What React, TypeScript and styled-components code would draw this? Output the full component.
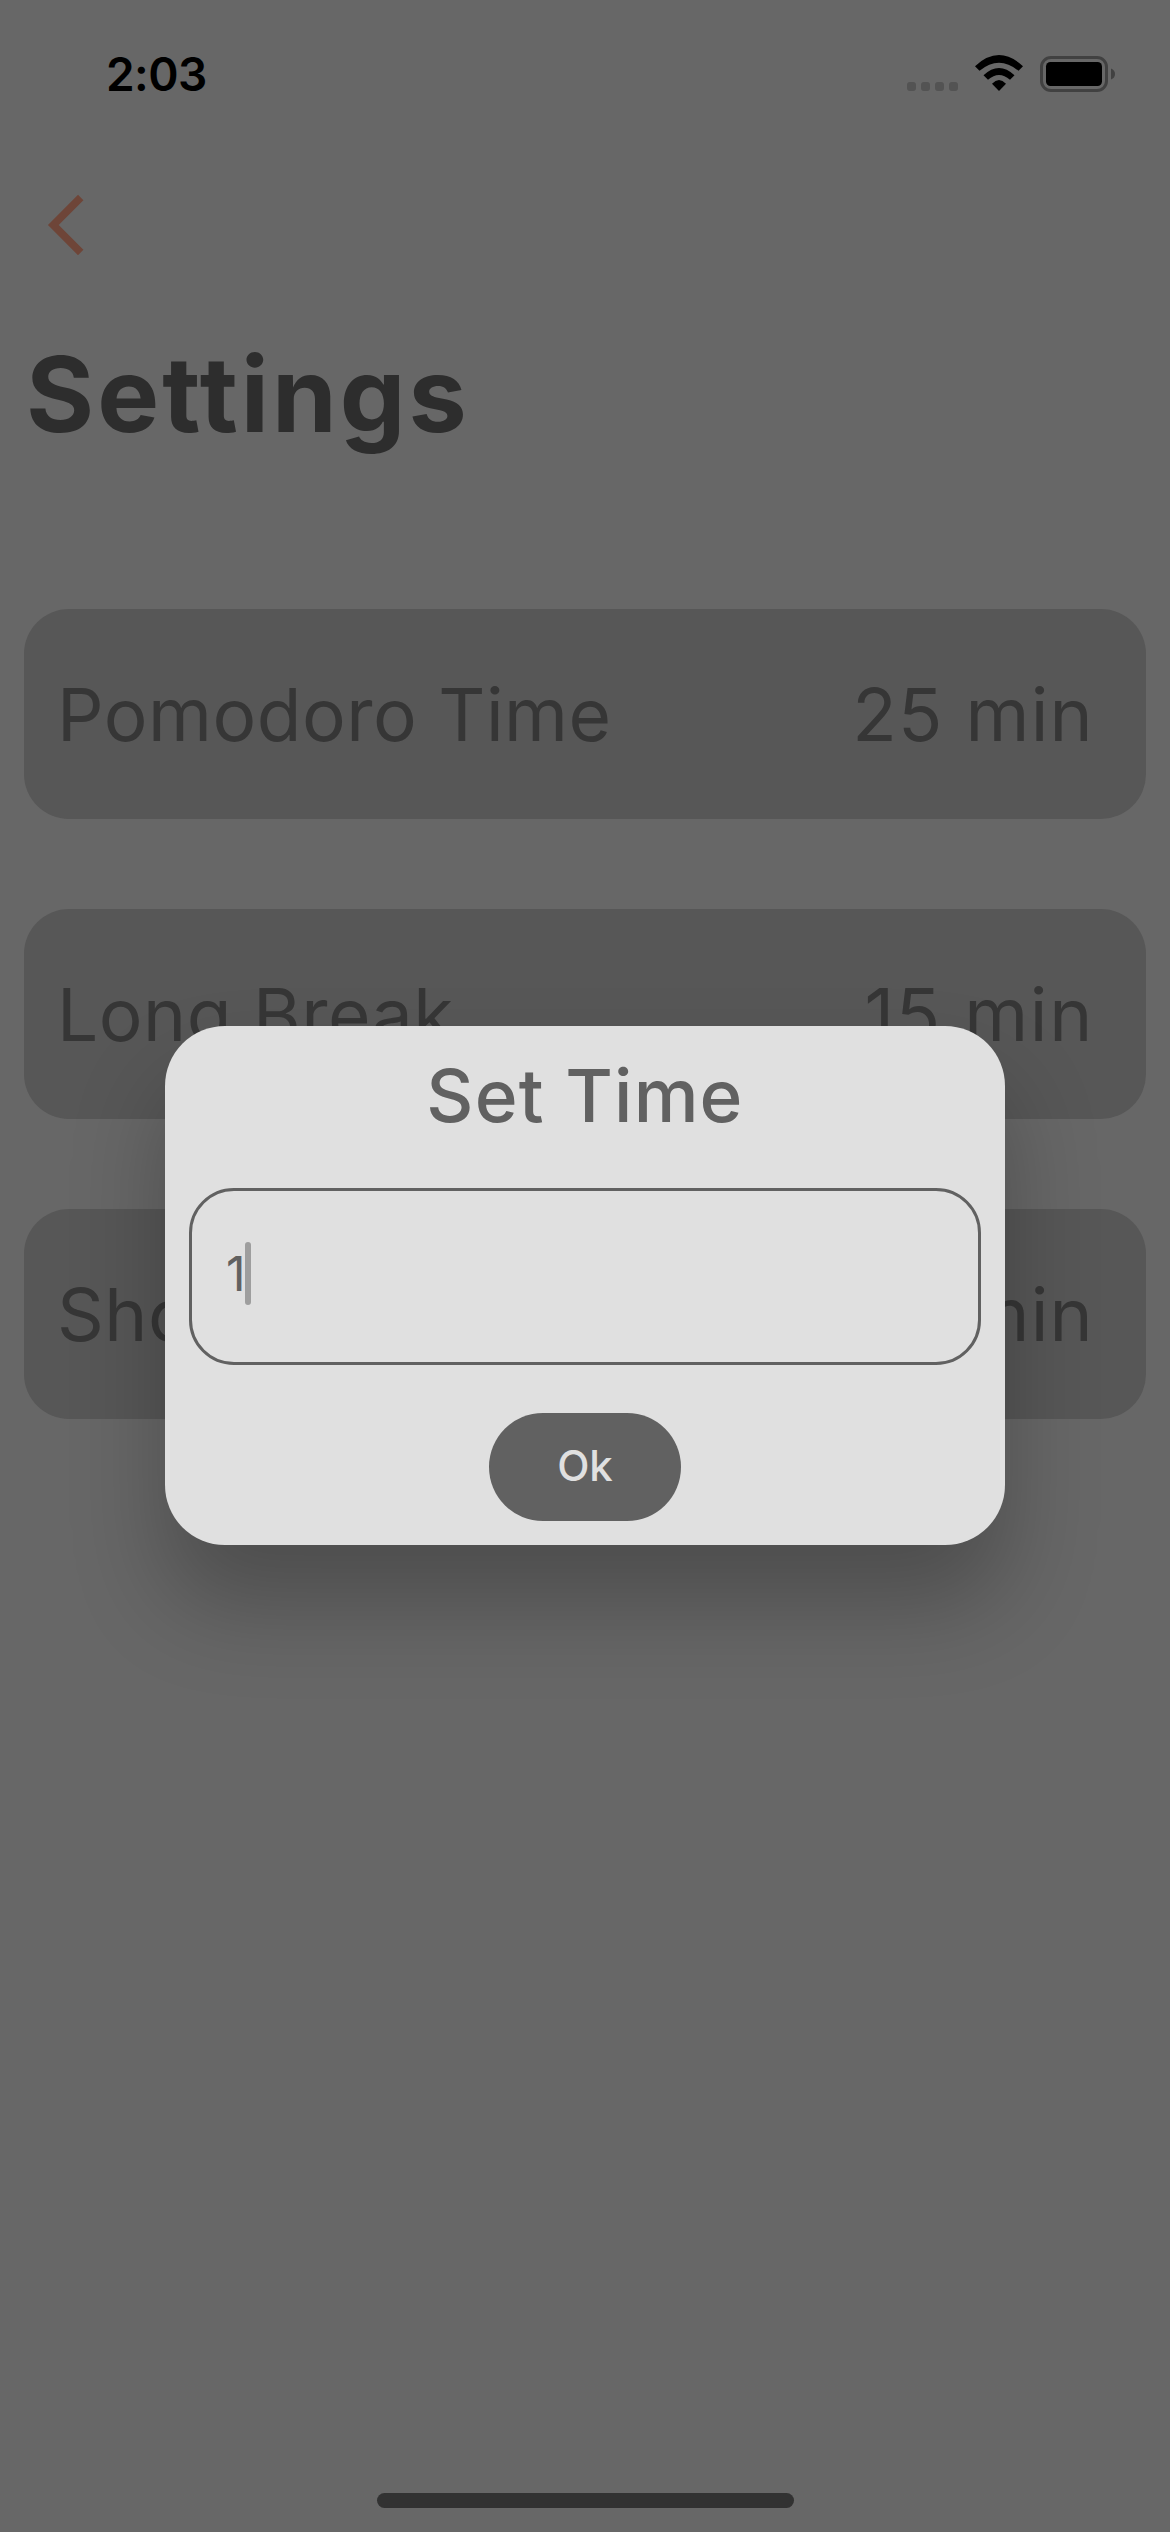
import React from 'react';
import styled, { createGlobalStyle } from 'styled-components';

const GlobalStyle = createGlobalStyle`
  * { box-sizing: border-box; }
  body { margin: 0; background: #676767; }
`;

const Screen = styled.div`
  position: relative;
  display: flex;
  flex-direction: column;
  width: 1170px;
  height: 2532px;
  overflow: hidden;
  background: #676767;
  font-family: Inter, 'Liberation Sans', sans-serif;
`;

const StatusBar = styled.header`
  display: flex;
  justify-content: space-between;
  align-items: center;
  height: 148px;
  padding: 0 55px 0 106px;
`;

const Clock = styled.time`
  font-size: 46px;
  line-height: 56px;
  font-weight: 600;
  letter-spacing: -0.55px;
  color: #000;
`;

const StatusIcons = styled.div`
  display: flex;
  align-items: center;
`;

const NavBar = styled.nav`
  display: flex;
  align-items: center;
  height: 154px;
  padding-left: 44px;
`;

const BackButton = styled.button`
  display: flex;
  padding: 0;
  border: 0;
  background: none;
`;

const PageTitle = styled.h1`
  margin: 28px 0 151px 26px;
  font-size: 104px;
  line-height: 128px;
  font-weight: 700;
  letter-spacing: 3.05px;
  color: #2d2d2d;
`;

const SettingList = styled.main`
  display: flex;
  flex-direction: column;
  gap: 90px;
  padding: 0 24px;
`;

const SettingRow = styled.section`
  display: flex;
  justify-content: space-between;
  align-items: center;
  height: 210px;
  padding: 1px 52px 0 33px;
  border-radius: 45px;
  background: #575757;
  font-size: 73px;
  line-height: 88px;
  color: #363636;
`;

const SettingLabel = styled.span`
  letter-spacing: 0.5px;
`;

const SettingValue = styled.span<{ $tracking: number }>`
  letter-spacing: ${(p) => p.$tracking}px;
`;

const HomeIndicator = styled.div`
  width: 417px;
  height: 15px;
  margin: auto auto 24px 377px;
  border-radius: 8px;
  background: #323232;
`;

const Overlay = styled.div`
  position: absolute;
  inset: 0;
  display: flex;
  justify-content: center;
  align-items: flex-start;
  padding-top: 1026px;
`;

const Dialog = styled.div`
  display: flex;
  flex-direction: column;
  align-items: center;
  width: 840px;
  height: 519px;
  padding: 26px 24px 24px;
  border-radius: 60px;
  background: #e0e0e0;
  box-shadow: 0 58px 92px rgba(0, 0, 0, 0.25);
`;

const DialogTitle = styled.h2`
  margin: 0 0 48px;
  font-size: 73px;
  line-height: 88px;
  font-weight: 500;
  letter-spacing: 1.15px;
  color: #616161;
`;

const TimeField = styled.div`
  display: flex;
  align-items: center;
  width: 100%;
  height: 177px;
  padding: 0 34px 6px;
  border: 3px solid #616161;
  border-radius: 45px;
  color: #616161;
  font-size: 48px;
  line-height: 58px;
`;

const Caret = styled.span`
  width: 6px;
  height: 63px;
  margin-left: -0.5px;
  border-radius: 3px;
  background: #9e9e9e;
`;

const OkButton = styled.button`
  width: 192px;
  height: 108px;
  margin-top: 48px;
  padding: 0 0 2px;
  border: 0;
  border-radius: 54px;
  background: #616161;
  color: #e0e0e0;
  font-family: inherit;
  font-size: 42px;
  line-height: 52px;
  font-weight: 500;
`;

const settings = [
  { label: 'Pomodoro Time', value: '25 min', tracking: 1.25 },
  { label: 'Long Break', value: '15 min', tracking: 1.7 },
  { label: 'Short Break', value: '5 min', tracking: 1.25 },
];

const StatusGlyphs = () => (
  <svg width="208" height="40" viewBox="907 54 208 40">
    {[907, 921, 935, 949].map((x) => (
      <rect key={x} x={x} y="82" width="9" height="9" rx="3" fill="#535353" />
    ))}
    <path d="M975 66.2 Q999 44 1023 66.2 L1018.5 70.8 Q999 54.5 979.5 70.8 Z" />
    <path d="M983.5 75.2 Q999 60.6 1014.5 75.2 L1010 79.8 Q999 70.2 988 79.8 Z" />
    <path d="M992 83.8 Q999 76.4 1006 83.8 L999 91 Z" />
    <rect x="1041.5" y="57.5" width="65" height="33" rx="9.5" fill="none" stroke="#414141" strokeWidth="3" />
    <rect x="1046" y="62" width="56" height="24" rx="4.5" />
    <path d="M1111 68.500 Q1115 70 1115 74 Q1115 78 1111 79.500 Z" fill="#414141" />
  </svg>
);

export default function App() {
  return (
    <>
      <GlobalStyle />
      <Screen>
        <StatusBar>
          <Clock>2:03</Clock>
          <StatusIcons>
            <StatusGlyphs />
          </StatusIcons>
        </StatusBar>
        <NavBar>
          <BackButton aria-label="Back">
            <svg width="44" height="64" viewBox="44 193 44 64">
              <path d="M80.7 197.5 L53.3 225 L80.7 252.5" fill="none" stroke="#6e4538" strokeWidth="7.6" />
            </svg>
          </BackButton>
        </NavBar>
        <PageTitle>Settings</PageTitle>
        <SettingList>
          {settings.map((s) => (
            <SettingRow key={s.label}>
              <SettingLabel>{s.label}</SettingLabel>
              <SettingValue $tracking={s.tracking}>{s.value}</SettingValue>
            </SettingRow>
          ))}
        </SettingList>
        <HomeIndicator />
        <Overlay>
          <Dialog role="dialog">
            <DialogTitle>Set Time</DialogTitle>
            <TimeField>
              <span>1</span>
              <Caret />
            </TimeField>
            <OkButton>Ok</OkButton>
          </Dialog>
        </Overlay>
      </Screen>
    </>
  );
}
